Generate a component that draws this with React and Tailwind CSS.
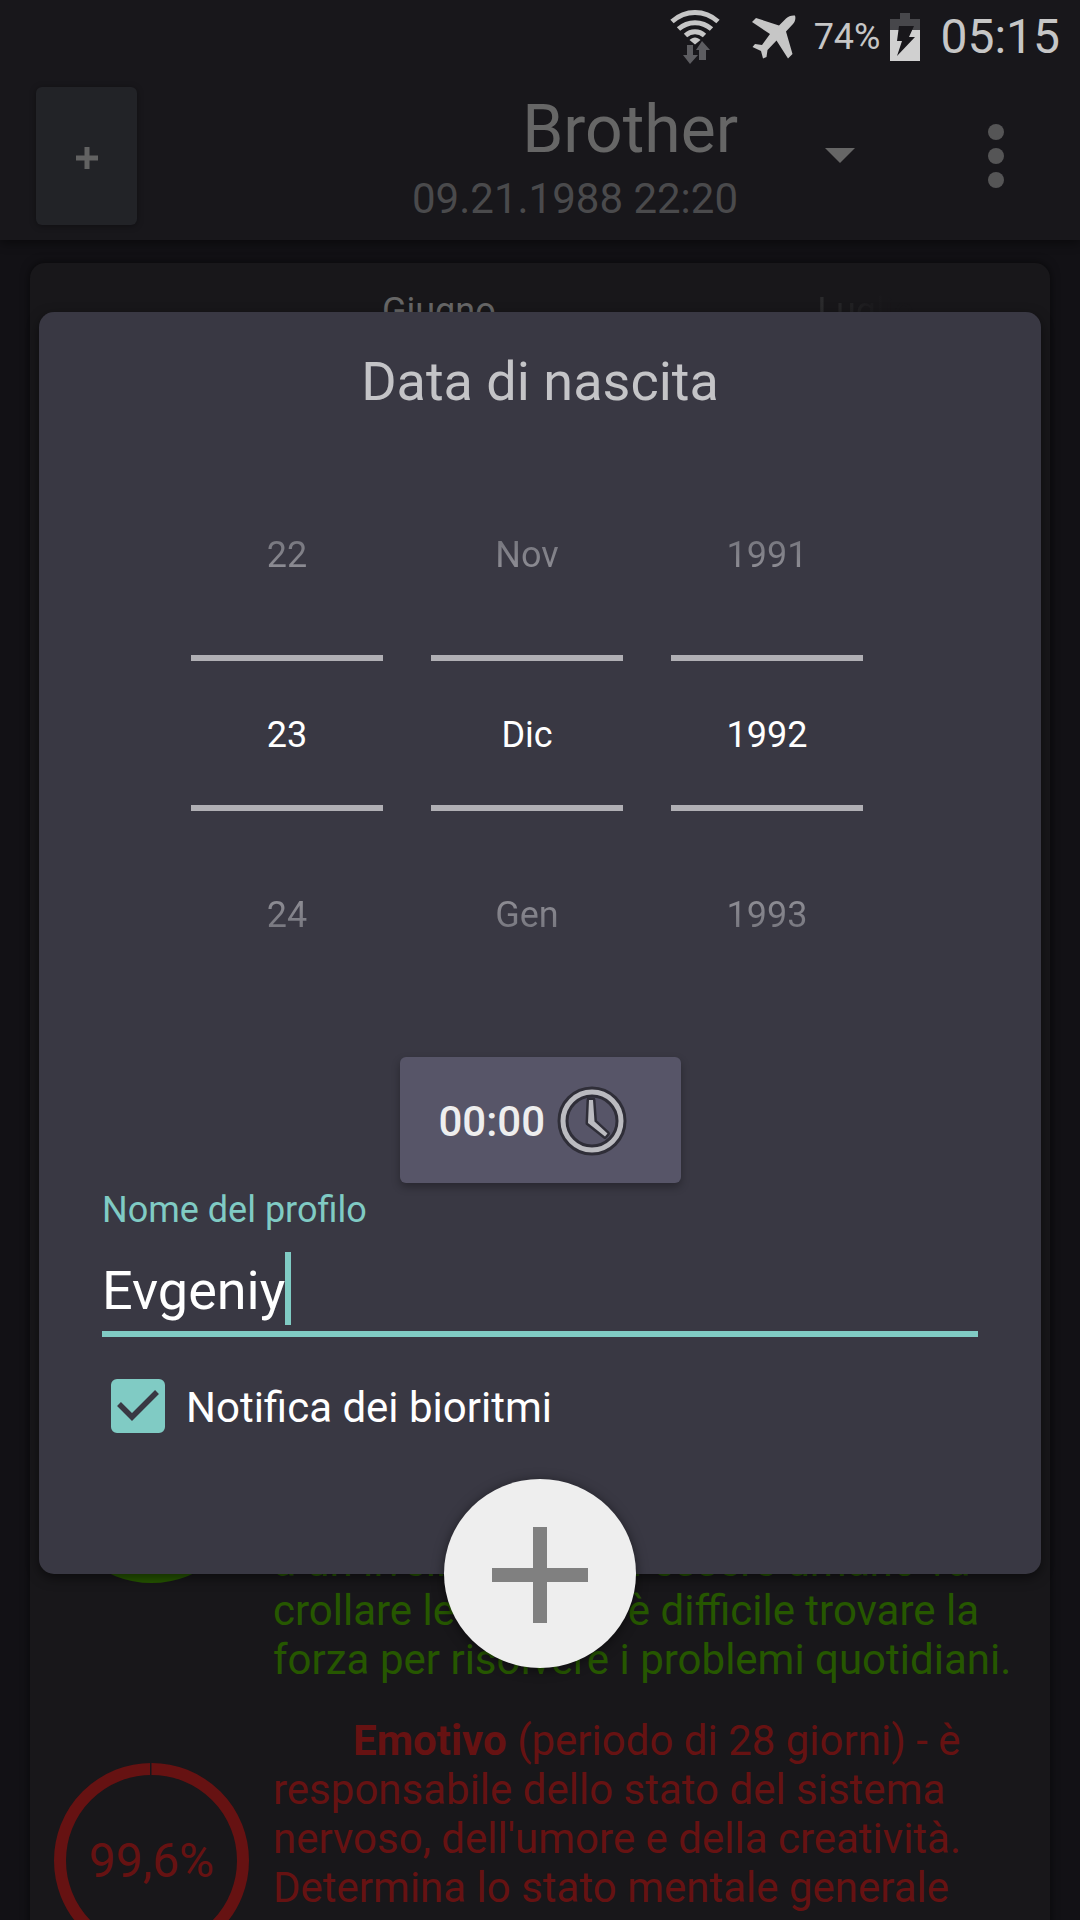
import React from "react";

const columns = [
  { label: "Giorno", before: "22", value: "23", after: "24" },
  { label: "Mese", before: "Nov", value: "Dic", after: "Gen" },
  { label: "Anno", before: "1991", value: "1992", after: "1993" },
];

function WifiIcon() {
  return (
    <svg className="h-[54px] w-[50px]" viewBox="0 0 50 54" fill="none" aria-hidden="true">
      <g stroke="#c6c6c6" strokeWidth="5">
        <path d="M2 11.5C15.500 -0.500 34.500 -0.500 48 11.500" />
        <path d="M8.500 19C18 10.500 32 10.500 41.500 19" />
        <path d="M15.500 25.500C21 20.500 29 20.500 34.500 25.500" />
      </g>
      <path d="M19.500 30C23 26.500 27 26.500 30.500 30L25 34.500Z" fill="#c6c6c6" />
      <path d="M17 35h6v10h5l-8 9-7-9h4z" fill="#5d5d61" />
      <path d="M29 50h7V40h4l-8-9-6 9h3z" fill="#5d5d61" />
    </svg>
  );
}

function PlaneIcon() {
  return (
    <svg className="h-[44px] w-[44px]" viewBox="0 0 44 44" fill="#c6c6c6" aria-hidden="true">
      <path d="M43 .5C40 0 36.500 1 34 3.500L27 10.500 4 3 0 7 18 19 10 30 3 29 .500 32 9 36 11 43.500 14.500 42 15.500 35 24.500 25.500 36 43.500 40.500 39 34 16.500 41 9C43 6.500 44 3.500 43 .5Z" />
    </svg>
  );
}

function BatteryIcon() {
  return (
    <svg className="h-[48px] w-[30px]" viewBox="0 0 30 48" aria-hidden="true">
      <path d="M10 0h10v6h10v11H0V6h10z" fill="#47474b" />
      <path d="M0 17h30v31H0z" fill="#d0d0d0" />
      <path d="M9 13h15l-5 11h6L7 43l5-15H7z" fill="#18171b" />
    </svg>
  );
}

function ClockIcon() {
  return (
    <svg className="h-[70px] w-[70px]" viewBox="0 0 70 70" fill="none" aria-hidden="true">
      <circle cx="35" cy="35" r="29" stroke="#2f2e38" strokeWidth="11" />
      <circle cx="35" cy="35" r="29" stroke="#bbbbc0" strokeWidth="5" />
      <path
        d="M32 14h4l1.500 21.500 13 12-2.500 3L31 37z"
        fill="#bbbbc0"
        stroke="#2f2e38"
        strokeWidth="5"
        strokeLinejoin="round"
        paintOrder="stroke"
      />
    </svg>
  );
}

function Ring({ className }) {
  return (
    <svg className={className} viewBox="0 0 195 195" fill="none" aria-hidden="true">
      <circle cx="97.500" cy="97.500" r="91.500" stroke="currentColor" strokeWidth="12" />
      <path d="M96 0h1.500v12H96z" fill="#18171b" />
    </svg>
  );
}

function Header() {
  return (
    <header className="relative z-10 bg-[#18171b] shadow-[0_3px_10px_rgba(0,0,0,0.45)]">
      <div className="flex h-[72px] items-center justify-end pt-0.5 pr-5 text-[#c6c6c6]">
        <WifiIcon />
        <div className="ml-8">
          <PlaneIcon />
        </div>
        <span className="ml-[18px] text-4xl">74%</span>
        <div className="ml-2.5">
          <BatteryIcon />
        </div>
        <span className="ml-5 text-5xl">05:15</span>
      </div>
      <div className="flex items-center pt-[15px] pb-[15px] pl-9">
        <button
          type="button"
          aria-label="Aggiungi profilo"
          className="flex h-[138px] w-[101px] items-center justify-center rounded-md bg-[#222327] text-[#626262] shadow-[0_1px_6px_rgba(0,0,0,0.35)]"
        >
          <svg className="mt-1 h-[22px] w-[22px]" viewBox="0 0 22 22" fill="currentColor" aria-hidden="true">
            <path d="M8.500 0h5v8.500H22v5h-8.500V22h-5v-8.500H0v-5h8.500z" />
          </svg>
        </button>
        <button type="button" className="ml-auto flex items-center text-right">
          <span>
            <span className="block text-[66px] leading-[86px] text-[#666666]">Brother</span>
            <span className="block text-[42px] leading-[52px] text-[#4a4a4c]">09.21.1988 22:20</span>
          </span>
          <svg className="mb-0.5 ml-[87px] h-[15px] w-[30px]" viewBox="0 0 30 15" fill="#666666" aria-hidden="true">
            <path d="M0 0h30L15 15z" />
          </svg>
        </button>
        <button type="button" aria-label="Altre opzioni" className="mr-[76px] ml-[133px]">
          <svg className="h-[64px] w-4" viewBox="0 0 16 64" fill="#555556" aria-hidden="true">
            <circle cx="8" cy="8" r="8" />
            <circle cx="8" cy="32" r="8" />
            <circle cx="8" cy="56" r="8" />
          </svg>
        </button>
      </div>
    </header>
  );
}

function BiorhythmCard() {
  return (
    <main className="mx-[30px] mt-[23px] rounded-t-[15px] bg-[#18171a] px-6 pt-7 text-[42px] leading-[49px] shadow-[0_0_10px_rgba(0,0,0,0.6)]">
      <div className="flex h-[950px] justify-between pr-28 pl-[328px] text-4xl">
        <span className="text-[#666666]">Giugno</span>
        <span className="h-12 bg-linear-to-r from-[#2c2c2e] to-[#18171a] to-70% bg-clip-text text-transparent">
          Luglio
        </span>
      </div>
      <section className="flex h-[443px] items-end gap-6 text-[#265700]">
        <Ring className="mb-[101px] h-[195px] w-[195px] shrink-0" />
        <p>
          a un livello medio di essere umano va
          <br />
          crollare le forze ed è difficile trovare la forza per risolvere i problemi quotidiani.
        </p>
      </section>
      <section className="mt-8 flex items-start gap-6 text-[#661212]">
        <div className="mt-[47px] grid shrink-0 place-items-center">
          <Ring className="col-start-1 row-start-1 h-[195px] w-[195px]" />
          <span className="col-start-1 row-start-1 text-5xl">99,6%</span>
        </div>
        <p className="indent-20">
          <b>Emotivo</b> (periodo di 28 giorni) - è responsabile dello stato del sistema nervoso, dell'umore e della creatività. Determina lo stato mentale generale
        </p>
      </section>
    </main>
  );
}

function PickerColumn({ label, before, value, after }) {
  return (
    <div role="spinbutton" aria-label={label} aria-valuetext={value} className="flex w-48 flex-col text-center text-4xl">
      <span className="flex h-[120px] items-start justify-center bg-linear-to-b from-[#73737b] to-[#94939a] to-35% bg-clip-text text-transparent">
        {before}
      </span>
      <span className="flex h-[156px] items-center justify-center border-y-6 border-[#b0afb4] pt-1 text-white">
        {value}
      </span>
      <span className="flex h-[124px] items-end justify-center bg-linear-to-b from-[#94939a] from-65% to-[#73737b] bg-clip-text text-transparent">
        {after}
      </span>
    </div>
  );
}

function BirthDialog() {
  return (
    <form
      role="dialog"
      aria-labelledby="dialog-title"
      className="absolute inset-x-[39px] top-[312px] z-20 flex flex-col rounded-[15px] bg-[#393843] px-[63px] pt-[38px] shadow-[0_4px_12px_rgba(0,0,0,0.5)]"
      onSubmit={(e) => e.preventDefault()}
    >
      <h1 id="dialog-title" className="text-center text-[54px] leading-[64px] text-[#c4c4c7]">
        Data di nascita
      </h1>
      <div className="mt-[121px] flex justify-center gap-12 pr-[26px]">
        {columns.map((c) => (
          <PickerColumn key={c.label} {...c} />
        ))}
      </div>
      <button
        type="button"
        className="mx-auto mt-[122px] flex h-[126px] w-[281px] items-center rounded-md bg-[#575568] pt-0.5 pl-[39px] text-[42px] font-medium text-[#eeeeee] shadow-[0_4px_8px_rgba(0,0,0,0.3)]"
      >
        00:00
        <span className="ml-3">
          <ClockIcon />
        </span>
      </button>
      <label htmlFor="profile-name" className="mt-[7px] text-4xl text-[#80cbc4]">
        Nome del profilo
      </label>
      <div className="relative mt-4">
        <input
          id="profile-name"
          type="text"
          defaultValue="Evgeniy"
          className="block h-[91px] w-full border-b-6 border-[#80cbc4] bg-transparent pt-1 text-[54px] text-white outline-none"
        />
        <span className="absolute top-1.5 left-[183px] h-[73px] w-1.5 bg-[#80cbc4]" />
      </div>
      <label className="mt-[42px] ml-[9px] flex items-center gap-[21px] text-[42px] leading-[54px] text-white">
        <span className="grid">
          <input
            type="checkbox"
            defaultChecked
            className="peer col-start-1 row-start-1 h-[54px] w-[54px] appearance-none rounded-md border-4 border-[#80cbc4] checked:bg-[#80cbc4]"
          />
          <svg
            className="pointer-events-none invisible col-start-1 row-start-1 h-[54px] w-[54px] peer-checked:visible"
            viewBox="0 0 54 54"
            fill="none"
            aria-hidden="true"
          >
            <path d="M8 25L21 38L46 13" stroke="#393843" strokeWidth="5.500" />
          </svg>
        </span>
        <span className="-mb-1">Notifica dei bioritmi</span>
      </label>
      <button
        type="submit"
        aria-label="Aggiungi"
        className="mx-auto mt-[46px] -mb-[94px] flex h-[189px] w-48 items-center justify-center rounded-[50%] bg-[#eeeeee] pt-0.5 shadow-[0_2px_12px_rgba(0,0,0,0.5)]"
      >
        <svg className="h-24 w-24" viewBox="0 0 96 96" fill="#808080" aria-hidden="true">
          <path d="M41 0h14v41h41v14H55v41H41V55H0V41h41z" />
        </svg>
      </button>
    </form>
  );
}

export default function App() {
  return (
    <div className="relative h-screen overflow-hidden bg-[#121115] font-['Roboto',sans-serif]">
      <Header />
      <BiorhythmCard />
      <BirthDialog />
    </div>
  );
}
